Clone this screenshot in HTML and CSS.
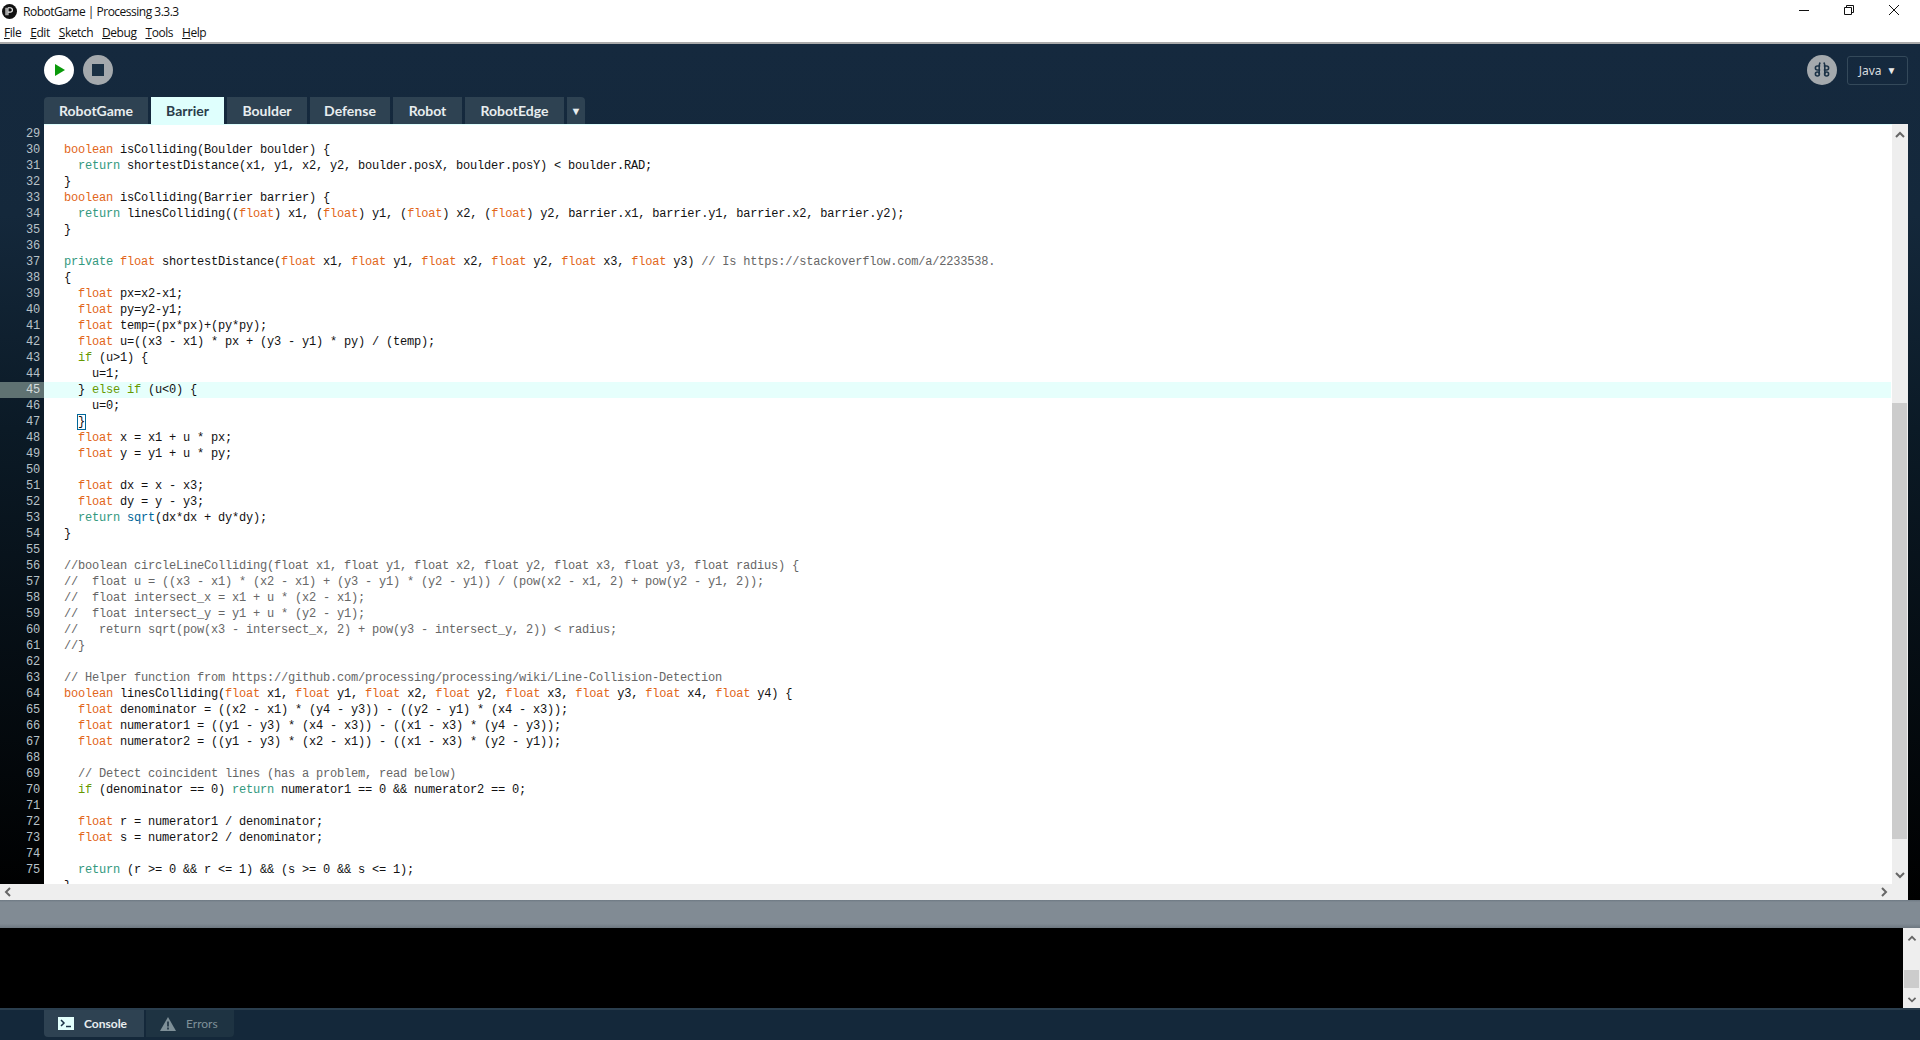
FILE: index.html
```html
<!DOCTYPE html>
<html lang="en">
<head>
    <meta charset="UTF-8">
    <title>RobotGame | Processing 3.3.3</title>
    <link rel="stylesheet" href="styles.css">
</head>
<body>
<div class="window">
    <!-- Title bar and menu -->
    <div class="titlebar">
        <svg class="app-icon" width="15" height="15" viewBox="0 0 14 14">
            <circle cx="7" cy="7" r="7" fill="#111"/>
            <path d="M5.5 3.5v7M5.5 3.5h2.2a2 2 0 0 1 0 4H5.5M3.8 3.5v7" fill="none" stroke="#eee" stroke-width="1.1"/>
        </svg>
        <span class="title">RobotGame | Processing 3.3.3</span>
        <div class="win-buttons">
            <svg width="12" height="12" viewBox="0 0 12 12"><path d="M1 6.5h10" stroke="#111" fill="none"/></svg>
            <svg width="12" height="12" viewBox="0 0 12 12"><path d="M1.5 3.5h7v7h-7zM3.5 3.5v-2h7v7h-2" stroke="#111" fill="none"/></svg>
            <svg width="12" height="12" viewBox="0 0 12 12"><path d="M1 1l10 10M11 1l-10 10" stroke="#111" fill="none"/></svg>
        </div>
    </div>
    <div class="menubar">
        <span><u>F</u>ile</span>
        <span><u>E</u>dit</span>
        <span><u>S</u>ketch</span>
        <span><u>D</u>ebug</span>
        <span><u>T</u>ools</span>
        <span><u>H</u>elp</span>
    </div>

    <!-- Main dark area -->
    <div class="main">
        <div class="toolbar">
            <div class="round-btn run">
                <svg width="10" height="12" viewBox="0 0 10 12"><path d="M0 0l10 6-10 6z" fill="#0a9a0a"/></svg>
            </div>
            <div class="round-btn stop"><div class="stop-square"></div></div>
            <div class="toolbar-right">
                <div class="round-btn debug">
                    <svg width="16" height="18" viewBox="0 0 16 18" fill="none" stroke="#1c3347" stroke-width="1.6">
                        <path d="M6.2 1.5c-.6 1-1 1.6-1 3.2v8.8M9.8 1.5c.6 1 1 1.6 1 3.2v8.8"/>
                        <path d="M6.2 5H3.4a1.8 1.8 0 0 0 0 4h2.8M9.8 5h2.8a1.8 1.8 0 0 1 0 4H9.8"/>
                        <circle cx="3.4" cy="13" r="2"/>
                        <circle cx="12.6" cy="13" r="2"/>
                    </svg>
                </div>
                <div class="mode-box">Java <span class="mode-arrow">▼</span></div>
            </div>
        </div>

        <div class="tabs">
            <div class="tab first">RobotGame</div>
            <div class="tab active b">Barrier</div>
            <div class="tab b2">Boulder</div>
            <div class="tab b2">Defense</div>
            <div class="tab b3">Robot</div>
            <div class="tab b4">RobotEdge</div>
            <div class="tab menu-tab">▼</div>
        </div>

        <div class="editor">
            <div class="gutter" id="gutter"></div>
            <div class="code" id="code"></div>
            <div class="vscroll">
                <svg class="arrow" width="10" height="8" viewBox="0 0 10 8"><path d="M1 6l4-4 4 4" fill="none" stroke="#666" stroke-width="2"/></svg>
                <div class="vtrack"><div class="vthumb"></div></div>
                <svg class="arrow" width="10" height="8" viewBox="0 0 10 8"><path d="M1 2l4 4 4-4" fill="none" stroke="#666" stroke-width="2"/></svg>
            </div>
        </div>
        <div class="hscroll">
            <svg width="8" height="10" viewBox="0 0 8 10"><path d="M6 1L2 5l4 4" fill="none" stroke="#666" stroke-width="2"/></svg>
            <svg width="8" height="10" viewBox="0 0 8 10"><path d="M2 1l4 4-4 4" fill="none" stroke="#666" stroke-width="2"/></svg>
        </div>
    </div>

    <!-- Divider and console -->
    <div class="divider"></div>
    <div class="console">
        <div class="console-scroll">
            <svg width="10" height="8" viewBox="0 0 10 8"><path d="M1 6l4-4 4 4" fill="none" stroke="#666" stroke-width="2"/></svg>
            <div class="console-thumb"></div>
            <svg width="10" height="8" viewBox="0 0 10 8"><path d="M1 2l4 4 4-4" fill="none" stroke="#666" stroke-width="2"/></svg>
        </div>
    </div>
    <div class="footer">
        <div class="foot-tab on">
            <svg width="16" height="13" viewBox="0 0 16 13">
                <rect width="16" height="13" fill="#e3fffc"/>
                <path d="M3 3l3 3-3 3" fill="none" stroke="#1c3347" stroke-width="1.5"/>
                <path d="M8 9.5h5" stroke="#1c3347" stroke-width="1.5"/>
            </svg>
            Console
        </div>
        <div class="foot-tab off">
            <svg width="16" height="14" viewBox="0 0 16 14">
                <path d="M8 0l8 14H0z" fill="#7f9098"/>
                <path d="M8 4.5v5M8 10.5v2" stroke="#1c3040" stroke-width="1.6"/>
            </svg>
            Errors
        </div>
    </div>
</div>
<script src="script.js"></script>
</body>
</html>
```

FILE: styles.css
```css
/* General Reset */
body, div {
    margin: 0;
    padding: 0;
    box-sizing: border-box;
}

html, body {
    height: 100%;
    background: #fff;
    overflow: hidden;
}

.window {
    width: 1920px;
    height: 1040px;
    display: flex;
    flex-direction: column;
    overflow: hidden;
    font-family: 'Noto Sans', sans-serif;
}

/* Title bar */
.titlebar {
    flex: none;
    height: 22px;
    display: flex;
    align-items: center;
    padding-left: 2px;
    font-size: 12px;
    color: #111;
}

.title {
    margin-left: 6px;
    font-family: 'Open Sans', sans-serif;
    letter-spacing: -0.5px;
}

.win-buttons {
    margin-left: auto;
    margin-right: 20px;
    margin-top: -2px;
    display: flex;
    gap: 33px;
}

.menubar {
    flex: none;
    height: 22px;
    display: flex;
    align-items: center;
    gap: 9px;
    padding-left: 4px;
    font-family: 'Open Sans', sans-serif;
    font-size: 12px;
    letter-spacing: -0.45px;
    color: #111;
    border-bottom: 2px solid #aaa;
}

/* Dark area */
.main {
    flex: 1;
    min-height: 0;
    display: flex;
    flex-direction: column;
    background: linear-gradient(#15293e 0%, #14283b 20%, #0b1a26 45%, #000 100%);
}

.toolbar {
    flex: none;
    height: 53px;
    display: flex;
    align-items: flex-start;
    padding: 11px 12px 0 44px;
    gap: 9px;
}

.round-btn {
    width: 30px;
    height: 30px;
    border-radius: 50%;
    display: flex;
    align-items: center;
    justify-content: center;
    background: #a4a9ad;
}

.run {
    background: #fff;
}

.run svg {
    margin-left: 2px;
}

.stop-square {
    width: 12px;
    height: 12px;
    background: #1a3044;
}

.toolbar-right {
    margin-left: auto;
    display: flex;
    align-items: center;
    gap: 10px;
}

.mode-box {
    width: 61px;
    height: 29px;
    border: 1px solid #34495a;
    border-radius: 3px;
    display: flex;
    align-items: center;
    justify-content: center;
    gap: 5px;
    color: #d8dcdf;
    font-size: 12px;
}

.mode-arrow {
    font-size: 10px;
    color: #e8eaec;
}

/* Tabs */
.tabs {
    flex: none;
    height: 27px;
    display: flex;
    gap: 3px;
    padding-left: 44px;
}

.tab {
    display: flex;
    align-items: center;
    justify-content: center;
    width: 80px;
    background: #2e4252;
    color: #e8edef;
    font-family: 'Lato', sans-serif;
    font-weight: 700;
    font-size: 14px;
}

.tab.first {
    width: 104px;
    border-top-left-radius: 4px;
}

.tab.active {
    background: #dffffd;
    color: #2a3c4a;
}

.tab.b {
    width: 73px;
}

.tab.b3 {
    width: 69px;
}

.tab.b4 {
    width: 99px;
}

.tab.menu-tab {
    width: 18px;
    font-size: 11px;
    border-top-right-radius: 4px;
}

/* Editor */
.editor {
    flex: 1;
    min-height: 0;
    display: flex;
    padding-right: 12px;
}

.gutter {
    width: 44px;
    padding-top: 2px;
    font-family: 'Liberation Mono', monospace;
    font-size: 12px;
    line-height: 16px;
    color: #b8c2c8;
    text-align: right;
    overflow: hidden;
}

.gutter div {
    height: 16px;
    padding-right: 4px;
    letter-spacing: -0.2px;
}

.gutter .cur {
    background: #5f7272;
    color: #d4dcdc;
}

.code {
    flex: 1;
    min-width: 0;
    overflow: hidden;
    padding-top: 1px;
    background: #fff;
    border-top: 1px solid #dffffd;
    font-family: 'Liberation Mono', monospace;
    font-size: 12px;
    letter-spacing: -0.2px;
    line-height: 16px;
    color: #111;
}

.code div {
    height: 16px;
    padding-left: 20px;
    white-space: pre;
}

.code .cur {
    background: #e6fffc;
    margin-right: 1px;
}

.k { color: #e2661a; }
.t { color: #33997e; }
.g { color: #669900; }
.f { color: #006699; }
.c { color: #666; }

.bracket {
    outline: 1px solid #006699;
}

.vscroll {
    width: 16px;
    background: #eee;
    display: flex;
    flex-direction: column;
    align-items: center;
    padding: 7px 0 5px;
}

.vtrack {
    flex: 1;
    width: 100%;
    padding-top: 260px;
    padding-bottom: 32px;
    display: flex;
    margin-top: 4px;
}

.vthumb {
    flex: 1;
    background: #ccc;
    margin-right: 1px;
}

.hscroll {
    flex: none;
    height: 16px;
    margin-right: 12px;
    background: #eee;
    display: flex;
    align-items: center;
    justify-content: space-between;
    padding: 0 20px 0 4px;
}

/* Divider and console */
.divider {
    flex: none;
    height: 28px;
    background: linear-gradient(#6e7a84 0, #818b94 8%, #818b94 85%, #6d7780 100%);
}

.console {
    flex: none;
    height: 80px;
    background: #000;
    display: flex;
    justify-content: flex-end;
}

.console-scroll {
    width: 17px;
    background: #eee;
    display: flex;
    flex-direction: column;
    align-items: center;
    padding: 7px 0 5px;
}

.console-thumb {
    width: 15px;
    height: 20px;
    background: #ccc;
    margin: 28px 0 8px;
}

.footer {
    flex: none;
    height: 32px;
    background: #14283a;
    border-top: 2px solid #2a3e4e;
    display: flex;
    gap: 2px;
    padding-left: 44px;
}

.foot-tab {
    height: 27px;
    display: flex;
    align-items: center;
    gap: 10px;
    font-family: 'Lato', sans-serif;
    font-size: 12px;
}

.foot-tab.on {
    width: 100px;
    padding-left: 14px;
    background: #2e4252;
    color: #e8edef;
    border-bottom-left-radius: 4px;
    font-weight: 700;
}

.foot-tab.off {
    width: 88px;
    padding-left: 14px;
    background: #1e3342;
    color: #7f9098;
    border-bottom-right-radius: 4px;
}
```

FILE: script.js
```js
// source lines, first one is line 29
const k = s => `<span class="k">${s}</span>`;
const t = s => `<span class="t">${s}</span>`;
const g = s => `<span class="g">${s}</span>`;
const f = s => `<span class="f">${s}</span>`;
const c = s => `<span class="c">${s}</span>`;
const fl = k('float');

const lines = [
    '',
    `${k('boolean')} isColliding(Boulder boulder) {`,
    `  ${t('return')} shortestDistance(x1, y1, x2, y2, boulder.posX, boulder.posY) &lt; boulder.RAD;`,
    '}',
    `${k('boolean')} isColliding(Barrier barrier) {`,
    `  ${t('return')} linesColliding((${fl}) x1, (${fl}) y1, (${fl}) x2, (${fl}) y2, barrier.x1, barrier.y1, barrier.x2, barrier.y2);`,
    '}',
    '',
    `${t('private')} ${fl} shortestDistance(${fl} x1, ${fl} y1, ${fl} x2, ${fl} y2, ${fl} x3, ${fl} y3) ${c('// Is https://stackoverflow.com/a/2233538.')}`,
    '{',
    `  ${fl} px=x2-x1;`,
    `  ${fl} py=y2-y1;`,
    `  ${fl} temp=(px*px)+(py*py);`,
    `  ${fl} u=((x3 - x1) * px + (y3 - y1) * py) / (temp);`,
    `  ${g('if')} (u&gt;1) {`,
    '    u=1;',
    `  } ${g('else')} ${g('if')} (u&lt;0) {`,
    '    u=0;',
    '  <span class="bracket">}</span>',
    `  ${fl} x = x1 + u * px;`,
    `  ${fl} y = y1 + u * py;`,
    '',
    `  ${fl} dx = x - x3;`,
    `  ${fl} dy = y - y3;`,
    `  ${t('return')} ${f('sqrt')}(dx*dx + dy*dy);`,
    '}',
    '',
    c('//boolean circleLineColliding(float x1, float y1, float x2, float y2, float x3, float y3, float radius) {'),
    c('//  float u = ((x3 - x1) * (x2 - x1) + (y3 - y1) * (y2 - y1)) / (pow(x2 - x1, 2) + pow(y2 - y1, 2));'),
    c('//  float intersect_x = x1 + u * (x2 - x1);'),
    c('//  float intersect_y = y1 + u * (y2 - y1);'),
    c('//   return sqrt(pow(x3 - intersect_x, 2) + pow(y3 - intersect_y, 2)) &lt; radius;'),
    c('//}'),
    '',
    c('// Helper function from https://github.com/processing/processing/wiki/Line-Collision-Detection'),
    `${k('boolean')} linesColliding(${fl} x1, ${fl} y1, ${fl} x2, ${fl} y2, ${fl} x3, ${fl} y3, ${fl} x4, ${fl} y4) {`,
    `  ${fl} denominator = ((x2 - x1) * (y4 - y3)) - ((y2 - y1) * (x4 - x3));`,
    `  ${fl} numerator1 = ((y1 - y3) * (x4 - x3)) - ((x1 - x3) * (y4 - y3));`,
    `  ${fl} numerator2 = ((y1 - y3) * (x2 - x1)) - ((x1 - x3) * (y2 - y1));`,
    '',
    `  ${c('// Detect coincident lines (has a problem, read below)')}`,
    `  ${g('if')} (denominator == 0) ${t('return')} numerator1 == 0 &amp;&amp; numerator2 == 0;`,
    '',
    `  ${fl} r = numerator1 / denominator;`,
    `  ${fl} s = numerator2 / denominator;`,
    '',
    `  ${t('return')} (r &gt;= 0 &amp;&amp; r &lt;= 1) &amp;&amp; (s &gt;= 0 &amp;&amp; s &lt;= 1);`,
    '}'
];

const gutter = document.getElementById('gutter');
const code = document.getElementById('code');

lines.forEach((text, i) => {
    const num = 29 + i;
    const cur = num === 45 ? ' class="cur"' : '';
    if (num < 76) gutter.innerHTML += `<div${cur}>${num}</div>`;
    code.innerHTML += `<div${cur}>${text}</div>`;
});
```
